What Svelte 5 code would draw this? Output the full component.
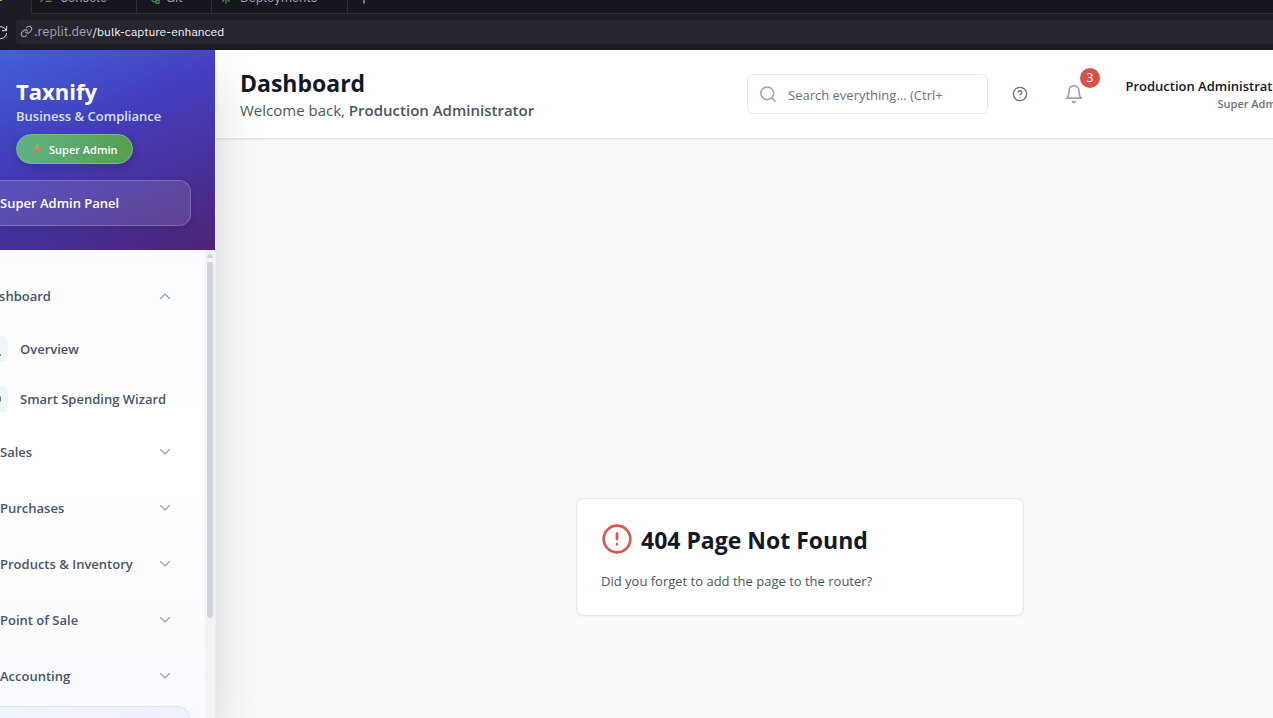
<script>
  const tabs = [
    { label: 'Console', icon: 'console' },
    { label: 'Git', icon: 'git' },
    { label: 'Deployments', icon: 'deploy' }
  ];
  const groups = ['Sales', 'Purchases', 'Products & Inventory', 'Point of Sale', 'Accounting'];
</script>

{#snippet chevron(up)}
  <svg class="chevron" viewBox="0 0 16 16" aria-hidden="true">
    <path d={up ? 'M3.5 10.5 8 6l4.500 4.500' : 'M3.500 5.500 8 10l4.500-4.500'} />
  </svg>
{/snippet}

<div class="window">
  <div class="chrome">
    <div class="tabs">
      <div class="tab first"><span class="spark"></span></div>
      {#each tabs as tab}
        <button class="tab {tab.icon}">
          <svg viewBox="0 0 14 14" aria-hidden="true">
            {#if tab.icon === 'console'}
              <path d="M1 3l4 4-4 4M7 11h6" />
            {:else if tab.icon === 'git'}
              <circle cx="3" cy="6" r="2" /><circle cx="11" cy="7" r="2" /><circle cx="10" cy="11.500" r="2" />
              <path d="M3 8q0 3.500 5 3.500M5 7h4" />
            {:else}
              <path d="M7 13V3M3 7l4-4 4 4M3 11l4-4 4 4" />
            {/if}
          </svg>
          <span>{tab.label}</span>
        </button>
      {/each}
      <button class="plus" aria-label="New tab">
        <svg viewBox="0 0 12 12"><path d="M6 1v10M1 6h10" /></svg>
      </button>
    </div>
    <div class="address">
      <button class="reload" aria-label="Reload">
        <svg viewBox="0 0 16 16"><path d="M14 5.500A6.500 6.500 0 1 0 14.500 9M14.500 1.500v4.500H10" /></svg>
      </button>
      <div class="url">
        <svg viewBox="0 0 24 24" aria-hidden="true">
          <path d="M10 13a5 5 0 0 0 7.500.5l3-3a5 5 0 0 0-7-7l-1.700 1.700" />
          <path d="M14 11a5 5 0 0 0-7.500-.5l-3 3a5 5 0 0 0 7 7l1.700-1.700" />
        </svg>
        <span class="host">.replit.dev</span><span class="path">/bulk-capture-enhanced</span>
      </div>
    </div>
  </div>

  <div class="app">
    <aside class="sidebar">
      <div class="panel">
        <div class="brand">
          <div class="identity">
            <div class="name">Taxnify</div>
            <div class="tagline">Business &amp; Compliance</div>
            <div class="role">
              <svg viewBox="0 0 12 14" aria-hidden="true">
                <defs>
                  <linearGradient id="bolt" x1="0" y1="0" x2="0" y2="1">
                    <stop offset="0" stop-color="#f2a55c" /><stop offset="1" stop-color="#e0544a" />
                  </linearGradient>
                </defs>
                <path d="M7.500 1 2.500 8H5.500L4.500 13 9.500 6H6.500z" fill="url(#bolt)" />
              </svg>
              Super Admin
            </div>
          </div>
          <button class="admin">Super Admin Panel</button>
        </div>
        <div class="body">
          <nav>
            <button class="group top"><span>Dashboard</span>{@render chevron(true)}</button>
            <a class="sub" href="#overview">
              <span class="tile">
                <svg viewBox="0 0 16 16"><path d="M2 14V8m4 6V4m4 10V9m1 5h2" /></svg>
              </span>
              Overview
            </a>
            <a class="sub" href="#wizard">
              <span class="tile">
                <svg viewBox="0 0 16 16"><path d="M8 2q5 2 5 6t-5 5-5-5 5-6" /><circle cx="11" cy="8" r="2" /></svg>
              </span>
              Smart Spending Wizard
            </a>
            {#each groups as label}
              <button class="group"><span>{label}</span>{@render chevron(false)}</button>
            {/each}
            <div class="current"></div>
          </nav>
          <div class="scroll">
            <svg viewBox="0 0 10 12" aria-hidden="true"><path d="M5 3 8 7v1H2V7z" /></svg>
            <div class="thumb"></div>
          </div>
        </div>
      </div>
    </aside>

    <main>
      <header>
        <div class="title">
          <h1>Dashboard</h1>
          <p>Welcome back, <strong>Production Administrator</strong></p>
        </div>
        <label class="search">
          <svg viewBox="0 0 24 24" aria-hidden="true"><circle cx="11" cy="11" r="8.500" /><path d="m21.500 21.500-4.300-4.300" /></svg>
          <input type="text" placeholder="Search everything... (Ctrl+" aria-label="Search everything" />
        </label>
        <button class="help" aria-label="Help">
          <svg viewBox="0 0 24 24"><circle cx="12" cy="12" r="10" /><path d="M9.100 9a3 3 0 0 1 5.800 1c0 2-3 3-3 3M12 17h.01" /></svg>
        </button>
        <button class="bell" aria-label="Notifications">
          <svg viewBox="0 0 24 24"><path d="M6 8a6 6 0 0 1 12 0c0 7 3 9 3 9H3s3-2 3-9M10.300 21a1.940 1.940 0 0 0 3.400 0" /></svg>
          <span class="count">3</span>
        </button>
        <div class="user">
          <div class="who">Production Administrator</div>
          <div class="what">Super Admin</div>
        </div>
      </header>
      <section>
        <div class="card">
          <div class="heading">
            <svg viewBox="0 0 24 24" aria-hidden="true"><circle cx="12" cy="12" r="10" /><path d="M12 8v4M12 16h.01" /></svg>
            <h2>404 Page Not Found</h2>
          </div>
          <p>Did you forget to add the page to the router?</p>
        </div>
      </section>
    </main>
  </div>
</div>

<style>
  :global(body) { margin: 0; background: #f9fafb; }
  * { box-sizing: border-box; }
  h1, h2, p { margin: 0; }
  button { border: 0; padding: 0; margin: 0; background: none; font: inherit; color: inherit; }
  a { color: inherit; text-decoration: none; }
  svg { fill: none; stroke: currentColor; stroke-width: 2; stroke-linecap: round; stroke-linejoin: round; flex: none; }

  .window {
    height: 100vh;
    overflow: hidden;
    display: flex;
    flex-direction: column;
    font-family: "Segoe UI", "Open Sans", "Noto Sans", sans-serif;
    color: #111827;
  }

  .chrome { flex: none; height: 50px; background: #1c1c26; color: #a3a5ae; font-family: "IBM Plex Sans", Inter, sans-serif; }
  .tabs { height: 14px; display: flex; align-items: flex-end; overflow: hidden; }
  .tab, .plus {
    height: 32px;
    flex: none;
    display: flex;
    align-items: center;
    gap: 8px;
    padding: 0 0 0 8px;
    background: #16161f;
    border-right: 1px solid #2b2d39;
    border-bottom: 1px solid #2b2d39;
    font-size: 13px;
  }
  .tab svg, .plus svg { width: 12px; height: 12px; stroke-width: 1.4; }
  .first { width: 32px; padding: 0; background: #1c1c26; border-bottom: 0; }
  .spark { width: 2px; height: 6px; background: #b39a4c; }
  .console { width: 105px; }
  .console svg { color: #8a7548; }
  .git { width: 75px; padding-left: 12px; gap: 5px; }
  .git svg, .deploy svg { color: #4d8a5b; }
  .deploy { width: 136px; }
  .plus { flex: 1; padding-left: 10px; border-right: 0; }
  .address { display: flex; align-items: center; height: 36px; gap: 8px; }
  .reload { width: 8px; display: flex; justify-content: flex-end; overflow: hidden; }
  .reload svg { width: 15px; height: 15px; stroke-width: 1; color: #e5e7eb; }
  .url {
    flex: 1;
    height: 24px;
    display: flex;
    align-items: center;
    padding: 0 0 2px 4px;
    background: #262630;
    border-radius: 4px 0 0 4px;
    font-size: 12px;
  }
  .url svg { width: 13px; height: 13px; margin-right: 1px; }
  .host { font-size: 13px; }
  .path { color: #f5f5f7; }

  .app { flex: 1; min-height: 0; display: flex; }
  .sidebar {
    position: relative;
    z-index: 1;
    flex: none;
    width: 216px;
    display: flex;
    justify-content: flex-end;
    box-shadow: 0 25px 50px -6px rgba(0, 0, 0, 0.2);
  }
  .panel { flex: none; width: 288px; display: flex; flex-direction: column; border-right: 1px solid #eceef3; background: #fff; }
  .brand {
    flex: none;
    padding: 24px;
    color: #fff;
    background: linear-gradient(rgba(0, 0, 0, 0.06), rgba(0, 0, 0, 0.14)), linear-gradient(154deg, #4670f0 0%, #4a42cc 48%, #592a8c 100%);
  }
  .identity { padding-left: 64px; }
  .name { font-size: 22px; line-height: 32px; font-weight: 700; padding-top: 1px; margin-bottom: -1px; }
  .tagline { font-size: 13px; line-height: 20px; font-weight: 600; color: #d6e2fb; }
  .role {
    width: 117px;
    height: 30px;
    margin-top: 8px;
    display: flex;
    align-items: center;
    gap: 6px;
    padding-left: 14px;
    border: 1px solid #80b98a;
    border-radius: 15px;
    background: linear-gradient(90deg, #60b285, #569f50);
    box-shadow: 0 4px 8px rgba(0, 0, 0, 0.15);
    font-size: 11px;
    font-weight: 600;
  }
  .role svg { width: 12px; height: 14px; stroke: none; }
  .admin {
    width: 100%;
    height: 46px;
    margin-top: 16px;
    padding-left: 47px;
    text-align: left;
    border: 1px solid rgba(255, 255, 255, 0.2);
    border-radius: 12px;
    background: rgba(255, 255, 255, 0.12);
    box-shadow: 0 4px 8px rgba(0, 0, 0, 0.1);
    font-size: 13px;
    font-weight: 600;
  }
  .body { flex: 1; min-height: 0; display: flex; overflow: hidden; background: linear-gradient(#fbfcff, #fff 45%, #f9fafe); }
  nav { flex: 1; padding: 18px 15px 0 16px; color: #475569; font-size: 13px; font-weight: 600; }
  .group { width: 100%; height: 56px; display: flex; align-items: center; justify-content: space-between; padding: 0 17px 0 56px; }
  .group.top { padding-left: 38px; }
  .chevron { width: 16px; height: 16px; color: #94a3b8; stroke-width: 1.3; }
  .sub { height: 50px; display: flex; align-items: center; gap: 12px; padding-left: 38px; }
  .tile { width: 26px; height: 26px; display: grid; place-items: center; border-radius: 6px; background: #f1f5f9; color: #64748b; }
  .tile svg { width: 16px; height: 16px; }
  .current {
    height: 48px;
    margin-top: 2px;
    border: 1px solid #d9e5fd;
    border-radius: 12px;
    background: linear-gradient(90deg, #eff6ff, #eef0ff);
  }
  .scroll { flex: none; width: 10px; padding: 0 2px; background: #f2f3f5; }
  .scroll svg { display: block; width: 10px; height: 12px; margin-left: -2px; fill: #d1d5db; stroke: none; }
  .thumb { height: calc(100% - 112px); border-radius: 3px; background: #d1d5db; }

  main { flex: 1; min-width: 0; margin-right: -111px; background: #f9fafb; }
  header {
    height: 89px;
    display: flex;
    align-items: center;
    padding: 0 24px;
    background: #fff;
    border-bottom: 1px solid #e5e7eb;
    box-shadow: 0 1px 2px rgba(0, 0, 0, 0.05);
  }
  .title { flex: 1; }
  h1, h2 { font-size: 23px; line-height: 32px; font-weight: 700; padding-top: 1px; margin-bottom: -1px; }
  .title p { font-size: 15px; line-height: 24px; color: #4b5563; }
  .title strong { font-weight: 600; }
  .search {
    width: 241px;
    height: 40px;
    display: flex;
    align-items: center;
    gap: 11px;
    padding: 0 11px;
    border: 1px solid #e5e7eb;
    border-radius: 6px;
    color: #9ca3af;
  }
  .search svg { width: 18px; height: 18px; }
  input { flex: 1; min-width: 0; border: 0; padding: 2px 0 0; outline: 0; background: none; font: inherit; font-size: 13px; }
  input::placeholder { color: #6b7280; opacity: 1; }
  .help { margin-left: 24px; width: 16px; height: 16px; color: #6b7280; }
  .help svg, .bell svg { display: block; width: 100%; height: 100%; }
  .bell { position: relative; margin-left: 36px; width: 20px; height: 20px; color: #9ca3af; }
  .count {
    position: absolute;
    top: -16px;
    left: 16px;
    width: 20px;
    height: 20px;
    border-radius: 50%;
    background: #d45149;
    color: #fff;
    font-size: 12px;
    line-height: 20px;
    text-align: center;
  }
  .user { margin-left: 41px; width: 235px; padding-right: 74px; text-align: right; white-space: nowrap; }
  .who { font-size: 13px; line-height: 20px; font-weight: 600; }
  .what { font-size: 11px; line-height: 16px; font-weight: 600; color: #6b7280; }

  section { min-height: calc(100vh + 118px); display: flex; align-items: center; justify-content: center; }
  .card {
    width: 448px;
    height: 118px;
    padding: 24px;
    background: #fff;
    border: 1px solid #e5e7eb;
    border-radius: 8px;
    box-shadow: 0 1px 2px rgba(0, 0, 0, 0.05);
  }
  .heading { display: flex; align-items: center; gap: 8px; }
  .heading svg { width: 32px; height: 32px; color: #d9534f; }
  .card p { margin-top: 16px; font-size: 13px; line-height: 20px; color: #4b5563; }
</style>
